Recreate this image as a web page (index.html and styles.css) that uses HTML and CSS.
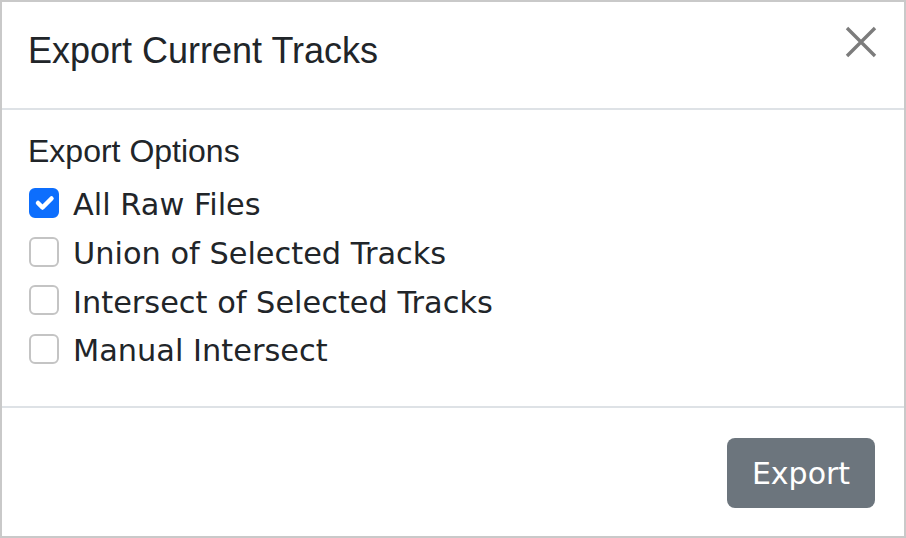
FILE: index.html
```html
<!DOCTYPE html>
<html lang="en">
<head>
<meta charset="utf-8">
<title>Export Current Tracks</title>
<link rel="stylesheet" href="styles.css">
</head>
<body>
<div class="modal">
  <div class="modal-header">
    <h5 class="modal-title">Export Current Tracks</h5>
    <button class="btn-close" aria-label="Close">
      <svg width="32" height="32" viewBox="0 0 32 32"><path d="M2 2 L30 30 M30 2 L2 30" stroke="#7c7c7c" stroke-width="3.4" fill="none"/></svg>
    </button>
  </div>
  <div class="modal-body">
    <div class="section-label">Export Options</div>
    <label class="check">
      <span class="box checked">
        <svg width="30" height="30" viewBox="0 0 20 20"><path d="M6 10l3 3l6-6" fill="none" stroke="#fff" stroke-width="3" stroke-linecap="round" stroke-linejoin="round"/></svg>
      </span>
      <span class="check-label">All Raw Files</span>
    </label>
    <label class="check">
      <span class="box"></span>
      <span class="check-label">Union of Selected Tracks</span>
    </label>
    <label class="check">
      <span class="box"></span>
      <span class="check-label">Intersect of Selected Tracks</span>
    </label>
    <label class="check">
      <span class="box"></span>
      <span class="check-label">Manual Intersect</span>
    </label>
  </div>
  <div class="modal-footer">
    <button class="btn-export">Export</button>
  </div>
</div>
</body>
</html>
```
FILE: styles.css
```css
html, body {
  margin: 0;
  padding: 0;
  background: #fff;
}

.modal {
  width: 906px;
  height: 538px;
  box-sizing: border-box;
  border: 2px solid #c9c9c9;
  display: flex;
  flex-direction: column;
  background: #fff;
  color: #212529;
}

.modal-header {
  height: 108px;
  box-sizing: border-box;
  border-bottom: 2px solid #dee2e6;
  padding: 22px 26px 0 26px;
  display: flex;
  justify-content: space-between;
  align-items: flex-start;
}

.modal-title {
  margin: 0;
  font-family: "Liberation Sans", Arial, sans-serif;
  font-weight: normal;
  font-size: 36px;
  line-height: 53px;
  color: #212529;
}

.btn-close {
  border: none;
  background: none;
  padding: 0;
  margin: 2px 1px 0 0;
  width: 32px;
  height: 32px;
  display: block;
}

.btn-close svg {
  display: block;
}

.modal-body {
  height: 296px;
  box-sizing: border-box;
  padding: 17.6px 26px 0 26px;
}

.section-label {
  font-family: "Liberation Sans", Arial, sans-serif;
  font-size: 32px;
  line-height: 47px;
  margin-bottom: 7.8px;
}

.check {
  display: flex;
  align-items: flex-start;
  height: 45px;
  margin-bottom: 3.7px;
}

.box {
  width: 30px;
  height: 30px;
  box-sizing: border-box;
  border: 2px solid #c4c4c4;
  border-radius: 6px;
  margin-top: 5.6px;
  margin-left: 1px;
  flex: none;
  background: #fff;
}

.box.checked {
  background: #0d6efd;
  border-color: #0d6efd;
}

.box.checked svg {
  display: block;
  margin: -2px;
}

.check-label {
  margin-left: 14px;
  font-family: "DejaVu Sans", Verdana, sans-serif;
  font-size: 30.4px;
  line-height: 45px;
  color: #212529;
}

.modal-footer {
  height: 130px;
  box-sizing: border-box;
  border-top: 2px solid #dee2e6;
  display: flex;
  justify-content: flex-end;
  align-items: center;
  padding: 2px 29px 0 0;
}

.btn-export {
  width: 148px;
  height: 70px;
  border: none;
  border-radius: 8px;
  background: #6c757d;
  color: #fff;
  font-family: "DejaVu Sans", Verdana, sans-serif;
  font-size: 30px;
  padding: 0;
}
```
